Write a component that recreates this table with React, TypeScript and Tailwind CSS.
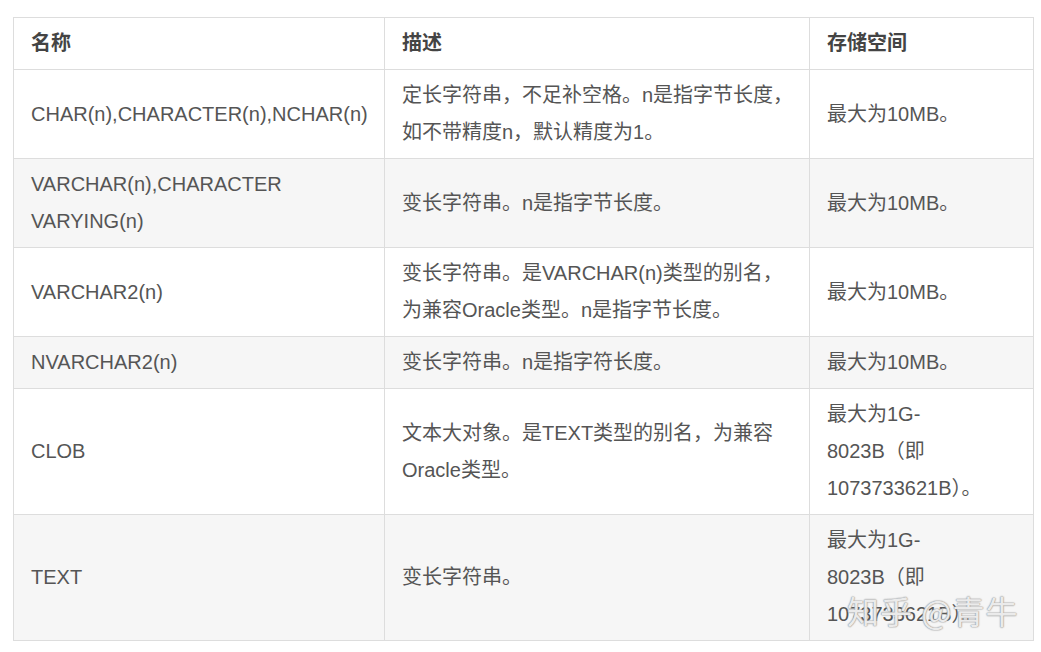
const rows: { name: string[]; desc: string[]; size: string[] }[] = [
  {
    name: ["CHAR(n),CHARACTER(n),NCHAR(n)"],
    desc: ["定长字符串，不足补空格。n是指字节长度，", "如不带精度n，默认精度为1。"],
    size: ["最大为10MB。"],
  },
  {
    name: ["VARCHAR(n),CHARACTER", "VARYING(n)"],
    desc: ["变长字符串。n是指字节长度。"],
    size: ["最大为10MB。"],
  },
  {
    name: ["VARCHAR2(n)"],
    desc: ["变长字符串。是VARCHAR(n)类型的别名，", "为兼容Oracle类型。n是指字节长度。"],
    size: ["最大为10MB。"],
  },
  {
    name: ["NVARCHAR2(n)"],
    desc: ["变长字符串。n是指字符长度。"],
    size: ["最大为10MB。"],
  },
  {
    name: ["CLOB"],
    desc: ["文本大对象。是TEXT类型的别名，为兼容", "Oracle类型。"],
    size: ["最大为1G-", "8023B（即", "1073733621B）。"],
  },
  {
    name: ["TEXT"],
    desc: ["变长字符串。"],
    size: ["最大为1G-", "8023B（即", "1073733621B）。"],
  },
];

function Lines({ lines }: { lines: string[] }) {
  return (
    <>
      {lines.map((l, i) => (
        <span key={i} className="block whitespace-nowrap">
          {l}
        </span>
      ))}
    </>
  );
}

export default function App() {
  return (
    <div
      className="relative min-h-[652px] w-[1041px] bg-white pt-[17px] pl-[13px] text-[20px] leading-[37px] text-[#555]"
      style={{ fontFamily: '"Liberation Sans", "Noto Sans CJK SC", sans-serif' }}
    >
      <table className="w-[1020px] table-fixed border-collapse">
        <colgroup>
          <col className="w-[371px]" />
          <col className="w-[425px]" />
          <col className="w-[224px]" />
        </colgroup>
        <thead>
          <tr className="bg-white">
            {["名称", "描述", "存储空间"].map((h) => (
              <th
                key={h}
                className="border border-[#dddddd] px-[17px] py-[7px] text-left align-middle font-bold text-[#444]"
              >
                {h}
              </th>
            ))}
          </tr>
        </thead>
        <tbody>
          {rows.map((r, i) => (
            <tr key={i} className={i % 2 === 1 ? "bg-[#f6f6f6]" : "bg-white"}>
              <td className="border border-[#dddddd] px-[17px] py-[7px] align-middle">
                <Lines lines={r.name} />
              </td>
              <td className="border border-[#dddddd] px-[17px] py-[7px] align-middle">
                <Lines lines={r.desc} />
              </td>
              <td className="border border-[#dddddd] px-[17px] py-[7px] align-middle">
                <Lines lines={r.size} />
              </td>
            </tr>
          ))}
        </tbody>
      </table>

      {/* watermark over the last cell */}
      <div
        className="pointer-events-none absolute left-[847px] top-[589px] whitespace-nowrap text-[32px] leading-[42px] tracking-[1px] text-white/80"
        style={{
          fontFamily: '"Noto Sans CJK SC", sans-serif',
          textShadow: "0 0 1px #999, 0 0 1px #999, 0 0 2px #aaa",
        }}
      >
        知乎 @青牛
      </div>
    </div>
  );
}
